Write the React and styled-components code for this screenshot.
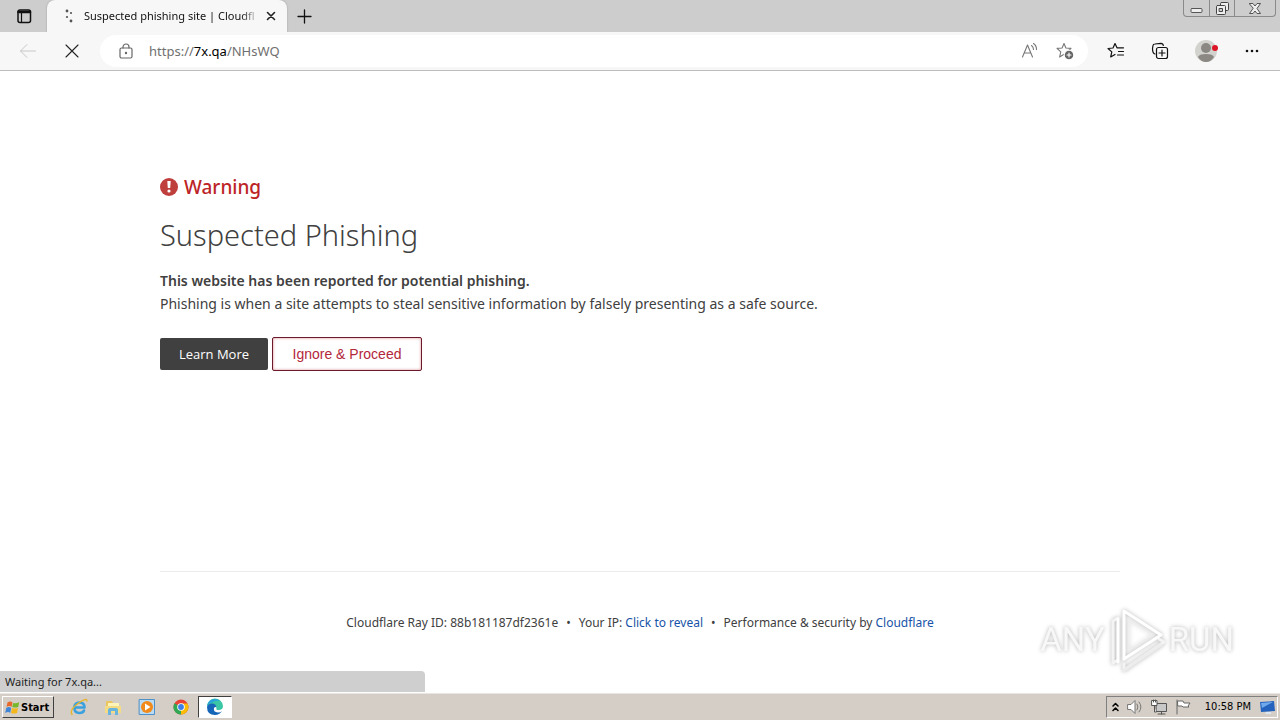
import React from "react";
import styled, { createGlobalStyle, css } from "styled-components";

const ui = `"Open Sans", "Noto Sans", sans-serif`;
const humanist = `"Noto Sans", "Open Sans", sans-serif`;
const classic = `"DejaVu Sans Condensed", "DejaVu Sans", sans-serif`;

const GlobalStyle = createGlobalStyle`
  *, *::before, *::after { box-sizing: border-box; }
  body { margin: 0; background: #fff; font-family: ${ui}; color: #404040; }
  button, input { font: inherit; color: inherit; margin: 0; }
  svg { display: block; flex: none; }
`;

const Desktop = styled.div`
  min-height: 100vh;
  display: flex;
  flex-direction: column;
`;

/* Browser chrome */
const TabStrip = styled.header`
  display: flex;
  height: 32px;
  background: #cdcdcd;
`;
const IconButton = styled.button`
  display: flex;
  align-items: center;
  justify-content: center;
  width: ${(p) => p.$w || 44}px;
  height: 32px;
  padding: 0;
  border: 0;
  background: none;
`;
const Tab = styled.div`
  display: flex;
  align-items: center;
  width: 240px;
  padding: 0 4px 0 16px;
  background: #f7f7f7;
  border-radius: 8px 8px 0 0;
  box-shadow: 0 0 2px #999;
`;
const TabTitle = styled.span`
  flex: 1;
  min-width: 0;
  margin-left: 5px;
  white-space: nowrap;
  font-family: ${humanist};
  font-size: 11px;
  line-height: 16px;
  color: #111;
  mask-image: linear-gradient(to right, #000 90%, transparent);
`;
const CaptionButtons = styled.div`
  display: flex;
  height: 17px;
  margin: 0 4px 0 auto;
  border: 1px solid #8a8a8a;
  border-top: 0;
  border-radius: 0 0 4px 4px;
`;
const CaptionButton = styled.button`
  display: flex;
  align-items: center;
  justify-content: center;
  width: ${(p) => p.$w}px;
  padding: 0;
  border: 0;
  background: none;
  & + & { border-left: 1px solid #8a8a8a; }
`;
const Toolbar = styled.nav`
  display: flex;
  align-items: center;
  height: 39px;
  padding: 0 6px;
  background: #f7f7f7;
  border-bottom: 1px solid #bdbdbd;
`;
const AddressBar = styled.div`
  flex: 1;
  display: flex;
  align-items: center;
  height: 32px;
  margin: 0 6px;
  padding: 0 6px 0 18px;
  background: #fff;
  border-radius: 16px;
`;
const AddressField = styled.label`
  flex: 1;
  display: grid;
  margin-left: 15px;
  font-family: ${humanist};
  font-size: 13px;
  line-height: 20px;
  & > * { grid-area: 1 / 1; }
`;
const AddressText = styled.span`
  color: #6f6f6f;
  b { font-weight: 400; color: #000; }
`;
const AddressInput = styled.input`
  width: 100%;
  padding: 0;
  border: 0;
  outline: 0;
  background: none;
`;

/* Warning page */
const Page = styled.main`
  position: relative;
  flex: 1;
  padding: 100px 24px 0;
`;
const Column = styled.div`
  max-width: 960px;
  margin: 0 auto;
`;
const Warning = styled.h2`
  display: flex;
  align-items: center;
  gap: 6px;
  margin: 0;
  font-family: ${humanist};
  font-size: 19px;
  font-weight: 500;
  line-height: 32px;
  color: #bd2426;
`;
const Title = styled.h1`
  margin: 12px 0 14px;
  font-family: ${humanist};
  font-size: 29px;
  font-weight: 300;
  line-height: 40px;
`;
const Lead = styled.p`
  margin: 0;
  font-family: ${humanist};
  font-size: 14px;
  font-weight: ${(p) => (p.$strong ? 600 : 400)};
  line-height: 23px;
`;
const Actions = styled.form`
  display: flex;
  align-items: center;
  gap: 4px;
  margin-top: 22px;
`;
const actionStyle = css`
  display: flex;
  align-items: center;
  justify-content: center;
  border-radius: 2px;
  line-height: 20px;
  text-decoration: none;
`;
const LearnMore = styled.a`
  ${actionStyle}
  width: 108px;
  height: 32px;
  background: #404040;
  color: #fff;
  font-size: 13px;
`;
const Proceed = styled.button`
  ${actionStyle}
  width: 150px;
  height: 34px;
  padding: 0;
  border: 1px solid #6b1a2c;
  box-shadow: inset 0 0 3px #d98a92;
  background: #fff;
  && { color: #b3273a; font-family: "Liberation Sans", Arial, sans-serif; font-size: 14px; }
`;
const Footer = styled.footer`
  display: flex;
  justify-content: center;
  gap: 8px;
  margin-top: 200px;
  padding-top: 41px;
  border-top: 1px solid #ebebeb;
  font-family: ${humanist};
  font-size: 12px;
  line-height: 20px;
  a { color: #1653a8; text-decoration: none; }
`;
const StatusBubble = styled.div`
  position: absolute;
  left: 0;
  bottom: 1px;
  width: 425px;
  height: 21px;
  padding-left: 5px;
  background: #cfcfcf;
  border-radius: 0 4px 0 0;
  font-family: ${humanist};
  font-size: 11px;
  line-height: 21px;
  color: #222;
`;
const Watermark = styled.div`
  position: absolute;
  right: 46px;
  bottom: 20px;
  display: flex;
  align-items: center;
  gap: 2px;
  filter: drop-shadow(0 0 2px #b5b5b5);
`;
const MarkText = styled.span`
  font-family: "Roboto", sans-serif;
  font-size: 33px;
  font-weight: 400;
  line-height: 64px;
  color: #f8f8f8;
`;

/* Taskbar */
const Taskbar = styled.footer`
  display: flex;
  align-items: center;
  height: 27px;
  padding: 0 2px;
  background: #d5cec6;
  border-top: 1px solid #e9e6e1;
  font-family: ${classic};
  color: #000;
`;
const StartButton = styled.button`
  display: flex;
  align-items: center;
  gap: 1px;
  width: 52px;
  height: 22px;
  margin-right: 8px;
  padding: 0 2px;
  border: 1px solid;
  border-color: #fff #404040 #404040 #fff;
  background: #d5cec6;
  font-size: 11px;
  font-weight: 700;
`;
const TaskButton = styled.button`
  display: flex;
  align-items: center;
  justify-content: center;
  width: 34px;
  height: 22px;
  padding: 0;
  border: 1px solid;
  border-color: ${(p) => (p.$active ? "#404040 #fff #fff #404040" : "transparent")};
  background: ${(p) => (p.$active ? "#fff" : "none")};
`;
const Tray = styled.div`
  display: flex;
  align-items: center;
  gap: 8px;
  height: 22px;
  margin-left: auto;
  padding: 0 1px 0 5px;
  border: 1px solid;
  border-color: #808080 #fff #fff #808080;
`;
const Clock = styled.time`
  margin-left: 6px;
  font-size: 11px;
  line-height: 20px;
`;

const Svg = ({ w = 18, h = w, box, stroke = "#222", sw = 1, children }) => (
  <svg width={w} height={h} viewBox={box || `0 0 ${w} ${h}`} fill="none" stroke={stroke}
    strokeWidth={sw} strokeLinecap="round" strokeLinejoin="round" aria-hidden="true">
    {children}
  </svg>
);

const Star = "M8 1.5 L9.9 6 L15 6.4 L11.2 9.8 L12.3 15 L8 12.2 L3.6 15 L4.8 9.8 L1 6.4 L6.1 6 Z";

export default function App() {
  return (
    <Desktop>
      <GlobalStyle />
      <TabStrip>
        <IconButton $w={47} aria-label="Tab actions">
          <Svg w={16} sw={1.5} stroke="#111">
            <rect x="2" y="2" width="12.500" height="12.500" rx="2" />
            <path d="M2.500 4h11.500" strokeWidth="2.500" /><path d="M5.500 5v9" strokeWidth="1.200" />
          </Svg>
        </IconButton>
        <Tab>
          <Svg w={16} stroke="none">
            <g fill="#555"><circle cx="4" cy="3" r="1.4" /><circle cx="8" cy="5" r="1.1" /><circle cx="4" cy="9" r="1.1" /><circle cx="8" cy="13" r="1.400" /></g>
          </Svg>
          <TabTitle>Suspected phishing site | Cloudfl</TabTitle>
          <IconButton $w={24} aria-label="Close tab">
            <Svg w={10} sw={1.6}><path d="M1.5 1.5l7 7M8.500 1.500l-7 7" /></Svg>
          </IconButton>
        </Tab>
        <IconButton $w={34} aria-label="New tab">
          <Svg w={15} sw={1.3} stroke="#111"><path d="M7.500 1v13M1 7.500h13" /></Svg>
        </IconButton>
        <CaptionButtons>
          <CaptionButton $w={25} aria-label="Minimize">
            <Svg w={13} h={12} stroke="#555"><rect x="1" y="6.500" width="11" height="4" rx="1" fill="#eee" /></Svg>
          </CaptionButton>
          <CaptionButton $w={25} aria-label="Restore">
            <Svg w={13} stroke="#444">
              <rect x="4.500" y="0.500" width="8" height="8" rx="1" fill="#eee" />
              <rect x="0.500" y="3.500" width="9" height="9" rx="1" fill="#eee" />
              <rect x="3.500" y="6.500" width="3" height="3" fill="#ccc" />
            </Svg>
          </CaptionButton>
          <CaptionButton $w={41} aria-label="Close">
            <Svg w={12} h={11} stroke="#555"><path fill="#eee" d="M.5.5h3.500L6 3 8 .5h3.500L8 5.500l3.500 5H8L6 8l-2 2.500H.5L4 5.500z" /></Svg>
          </CaptionButton>
        </CaptionButtons>
      </TabStrip>

      <Toolbar>
        <IconButton aria-label="Back">
          <Svg w={18} stroke="#c8c8c8"><path d="M1.500 9h15M8 2.500L1.500 9 8 15.500" /></Svg>
        </IconButton>
        <IconButton aria-label="Stop loading">
          <Svg w={14} sw={1.1}><path d="M1 1l12 12M13 1L1 13" /></Svg>
        </IconButton>
        <AddressBar>
          <Svg w={16} stroke="#686868" sw={1.2}>
            <rect x="2" y="5" width="12" height="10" rx="1.500" />
            <path d="M5 5V4a3 3 0 0 1 6 0v1" />
            <circle cx="8" cy="10" r=".6" fill="#686868" />
          </Svg>
          <AddressField>
            <AddressText>https://<b>7x.qa</b>/NHsWQ</AddressText>
            <AddressInput aria-label="Address" />
          </AddressField>
          <IconButton $w={35} aria-label="Read aloud">
            <Svg w={18} stroke="#777" sw={1.1}>
              <path d="M1.500 15L6.500 3l5 12M3.500 11h6M10.500 3.500a5 5 0 0 1 2 4M12.500 1.500a7 7 0 0 1 3 6" />
            </Svg>
          </IconButton>
          <IconButton $w={35} aria-label="Add to favorites">
            <Svg w={18} stroke="#777" sw={1.1}>
              <path d={Star} /><circle cx="13" cy="13" r="4.800" fill="#666" stroke="#fff" />
              <path d="M13 11v4M11 13h4" stroke="#fff" />
            </Svg>
          </IconButton>
        </AddressBar>
        <IconButton aria-label="Favorites">
          <Svg w={18} sw={1.2} stroke="#111">
            <path d="M10 5.800L8 1.500 6 6l-5 .5 3.800 3.400L3.700 15 8 12.500M10 5.800h6.500M11.500 9.500h5M10.500 13h6" />
          </Svg>
        </IconButton>
        <IconButton aria-label="Collections">
          <Svg w={18} sw={1.2} stroke="#111">
            <path d="M4 12C2 11.500 1.500 9 1.500 6.500L2 3.500Q2.200 2 4 2l6-.7q2 0 2.300 2.200" />
            <rect x="5.500" y="5.500" width="11" height="11" rx="2" fill="#f7f7f7" />
            <path d="M11 8v6M8 11h6" />
          </Svg>
        </IconButton>
        <IconButton $w={48} aria-label="Profile">
          <Svg w={24} stroke="none">
            <circle cx="12" cy="12" r="11" fill="#d2d2ce" />
            <circle cx="12" cy="9" r="5" fill="#8b8783" />
            <path d="M4 18q1-3 8-3t8 3q-3 5-8 5t-8-5" fill="#8b8783" />
            <circle cx="21" cy="9" r="3" fill="#dc1626" />
          </Svg>
        </IconButton>
        <IconButton aria-label="Settings and more">
          <Svg w={14} h={4} stroke="none"><g fill="#111"><circle cx="2" cy="2" r="1.300" /><circle cx="7" cy="2" r="1.300" /><circle cx="12" cy="2" r="1.300" /></g></Svg>
        </IconButton>
      </Toolbar>

      <Page>
        <Column>
          <Warning>
            <Svg w={18} stroke="none">
              <circle cx="9" cy="9" r="9" fill="#bf3f3d" />
              <path d="M7.300 3h3.400l-.5 7H7.800z" fill="#fff" /><circle cx="9" cy="13" r="1.600" fill="#fff" />
            </Svg>
            Warning
          </Warning>
          <Title>Suspected Phishing</Title>
          <Lead $strong>This website has been reported for potential phishing.</Lead>
          <Lead>Phishing is when a site attempts to steal sensitive information by falsely presenting as a safe source.</Lead>
          <Actions onSubmit={(e) => e.preventDefault()}>
            <LearnMore href="#learn">Learn More</LearnMore>
            <Proceed type="submit">Ignore &amp; Proceed</Proceed>
          </Actions>
          <Footer>
            <span>Cloudflare Ray ID: 88b181187df2361e</span>
            <span>•</span>
            <span>Your IP: <a href="#reveal">Click to reveal</a></span>
            <span>•</span>
            <span>Performance &amp; security by <a href="#cloudflare">Cloudflare</a></span>
          </Footer>
        </Column>
        <StatusBubble>Waiting for 7x.qa...</StatusBubble>
        <Watermark>
          <MarkText>ANY</MarkText>
          <Svg w={60} h={66} stroke="#f4f4f4" sw={3}>
            <path d="M11 11L6 14v42l5-3M17 57v6L57 35l-5-3" />
            <path d="M11 12v43" stroke="#fff" />
            <path d="M17 4v48l37-24z" stroke="#fff" />
            <path d="M22 14v29l23-15z" stroke="#eee" strokeWidth="1" />
            <path d="M17 63l37-25" stroke="#ececec" />
          </Svg>
          <MarkText>RUN</MarkText>
        </Watermark>
      </Page>

      <Taskbar>
        <StartButton>
          <Svg w={15} stroke="none">
            <path d="M2.500 2.500q3-2 5 0L6.500 7q-2-2-5 0z" fill="#e8682c" /><path d="M8.200 3q3 1 6-1l-1 5q-3 1-6 0z" fill="#76b82a" />
            <path d="M1.200 8q3-2 5 0l-1 5q-2-2-5 0z" fill="#3f86d8" /><path d="M7 8q3 1 6 0l-1 5q-3 1-6 0z" fill="#f5b81c" />
          </Svg>
          Start
        </StartButton>
        <TaskButton aria-label="Internet Explorer">
          <Svg w={18} stroke="#3aa0de" sw={2.6}>
            <path d="M4.500 9.500h10q0-5-5-5t-5.200 5.300Q4.500 15 9.500 15q3.500 0 4.500-2.500" />
            <path d="M2 16.500Q-1 12 8 5.500T17 3" stroke="#e6b62d" strokeWidth="1.400" />
          </Svg>
        </TaskButton>
        <TaskButton aria-label="File Explorer">
          <Svg w={18} stroke="none">
            <path d="M2 3h6l1 2h6v10H2z" fill="#e9c65f" /><path d="M4 5h11v6H4z" fill="#fff4b8" />
            <path d="M1 8h16v7H1z" fill="#f3dc83" /><path d="M4 17v-5q0-2 2-2h6q2 0 2 2v5h-3v-4H7v4z" fill="#69b4dc" />
          </Svg>
        </TaskButton>
        <TaskButton aria-label="Media Player">
          <Svg w={18} stroke="none">
            <rect x="1.500" y="1.500" width="15" height="15" fill="#b9dcf4" stroke="#4d91c8" />
            <circle cx="9" cy="9" r="6" fill="#f18a1b" /><path d="M7 5.500v7L12.500 9z" fill="#fff" />
          </Svg>
        </TaskButton>
        <TaskButton aria-label="Chrome">
          <Svg w={18} stroke="none">
            <circle cx="9" cy="9" r="7.500" fill="#e94335" />
            <path d="M9 9L2.500 5.200A7.500 7.500 0 0 0 9 16.500z" fill="#31a853" />
            <path d="M9 9v7.500A7.500 7.500 0 0 0 15.500 5.500H9z" fill="#fbbc05" />
            <circle cx="9" cy="9" r="3.800" fill="#fff" /><circle cx="9" cy="9" r="2.900" fill="#3f7fe8" />
          </Svg>
        </TaskButton>
        <TaskButton $active aria-label="Edge">
          <Svg w={18} stroke="none">
            <path d="M1 9a8 8 0 0 1 16-1q0 4-4.500 4-3 0-2-2Q10 6 6 6 2.500 6 1 9" fill="#3bc6a5" />
            <path d="M1 8Q2.500 1 9 1q3 0 5 2-4-1-7 1-4 1-6 4" fill="#2aa3dc" />
            <path d="M1 9q1-3.500 5-3.500t4.500 4Q9 8.500 8 10q-1 4 4 4.500 2.500 0 4-1.500-2.500 4-7 4-8 0-8-8" fill="#1565b8" />
          </Svg>
        </TaskButton>
        <Tray>
          <Svg w={7} h={10} sw={1.500} stroke="#000"><path d="M1 4l2.500-2.500L6 4M1 8.500L3.500 6 6 8.500" /></Svg>
          <Svg w={16} stroke="#777"><path fill="#fff" d="M1 5.500h3l4-4v13l-4-4H1z" /><path d="M10 5q2 3 0 6M12 3q4 5 0 10" /></Svg>
          <Svg w={16} stroke="#555"><rect x="5.500" y="4.500" width="10" height="8" fill="#c8c8c8" /><path d="M7 15h7M10.500 13v2" /><path d="M1 1.500h5v5H1zM2.500 1v2M4.500 1v2M3.500 7v6H5" fill="#fff" /></Svg>
          <Svg w={16} stroke="#666"><path d="M2 1v14" /><path d="M3 2h5l1 2h6l-2 3 1 1H8L7 7H3z" fill="#fff" /></Svg>
          <Clock>10:58 PM</Clock>
          <Svg w={17} h={16} stroke="none"><path d="M1 3l14-1 1 10-14 1z" fill="#2463bd" /><path d="M2 4l12-1-11 6z" fill="#71a9ed" /><path d="M7 13h5v2H6z" fill="#dce7f3" /></Svg>
        </Tray>
      </Taskbar>
    </Desktop>
  );
}
